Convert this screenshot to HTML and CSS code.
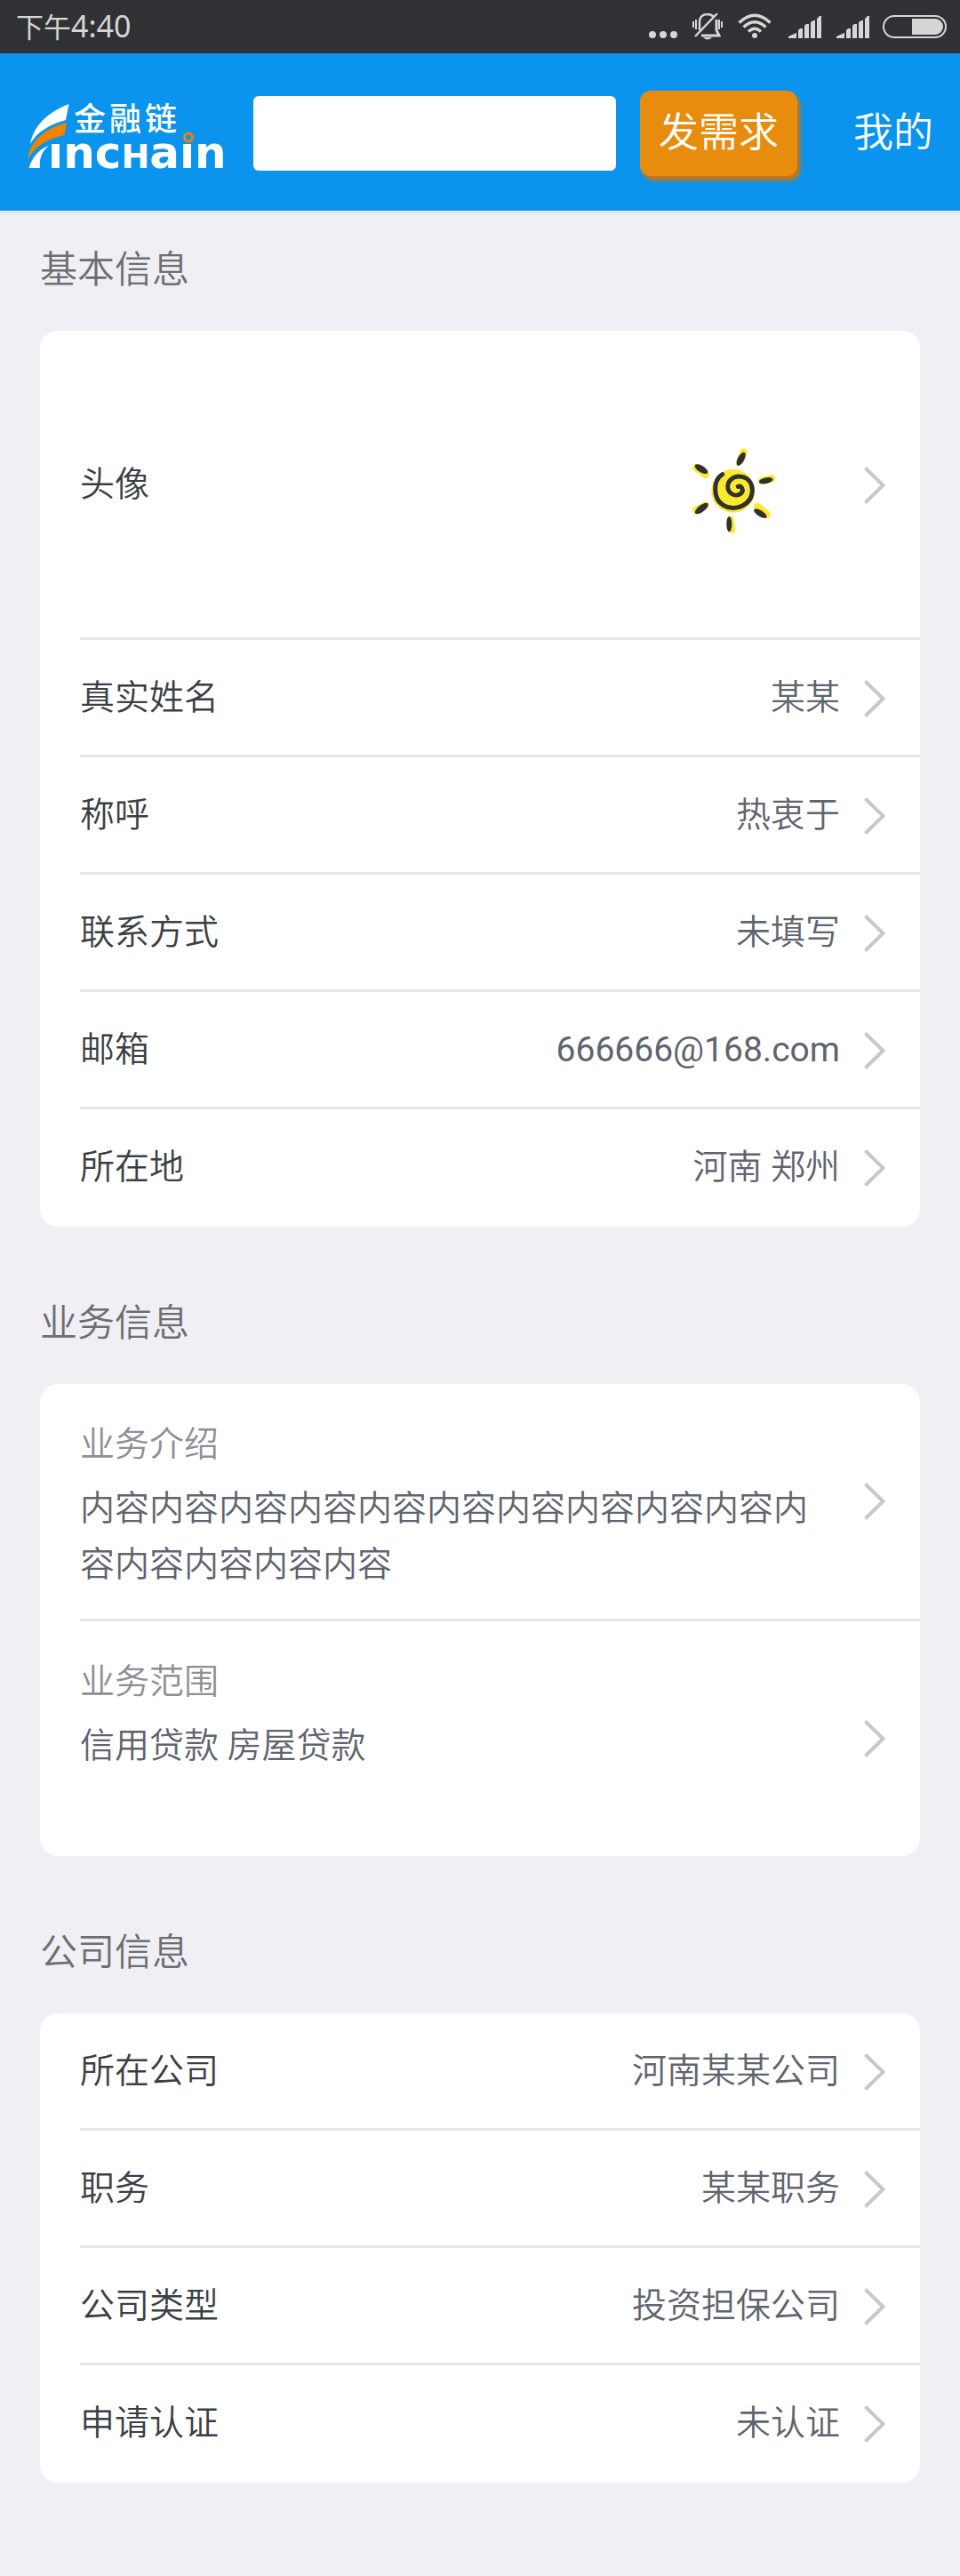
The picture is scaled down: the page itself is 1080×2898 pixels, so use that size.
FILE: index.html
```html
<!DOCTYPE html>
<html lang="zh-CN">
<head>
<meta charset="utf-8">
<meta name="viewport" content="width=device-width, initial-scale=1">
<title>基本信息</title>
<link rel="stylesheet" href="styles.css">
</head>
<body>
<svg width="0" height="0" class="defs" aria-hidden="true">
  <symbol id="chevron" viewBox="0 0 24 42"><path d="M1.500 1.500L21.500 21L1.500 40.500" fill="none" stroke="#c7c7cc" stroke-width="4"/></symbol>
  <symbol id="signal" viewBox="0 0 39 30"><path d="M2 28V26L11 22V28ZM13 28V19L15 17H18V28ZM20 28V14L22 12H25V28ZM27 28V10L30 8H32V28ZM34 28V6L37 3H39V28Z" fill="#d6d6d6"/></symbol>
</svg>

<div class="status">
  <span class="time">下午<span class="digits">4:40</span></span>
  <div class="status-icons">
    <svg width="34" height="30" viewBox="0 0 34 30" fill="#d6d6d6"><circle cx="4" cy="24" r="4"/><circle cx="16" cy="24" r="4"/><circle cx="28" cy="24" r="4"/></svg>
    <svg width="36" height="30" viewBox="0 0 36 30" fill="none" stroke="#d6d6d6">
      <path d="M8 19V10C8 4 12 1 17 1C20 1 22 2 24 4" stroke-width="2.500"/>
      <path d="M27 7V18C27 21 29 22 30 25H10" stroke-width="3"/>
      <path d="M3 26L28 0" stroke-width="2.500"/>
      <path d="M1 9V16M4 7V18M30 7V18M33 9V16" stroke-width="2"/>
      <path d="M12 27H22Q17 32 12 27Z" fill="#d6d6d6" stroke="none"/>
    </svg>
    <svg width="40" height="30" viewBox="0 0 40 30" fill="none" stroke="#d6d6d6" stroke-width="3.500">
      <path d="M1.500 10.500Q19 -6 36.500 10.500M6.500 15.500Q19 4 31.500 15.500M12 20.500Q19 14 26 20.500"/>
      <circle cx="19" cy="25" r="3" fill="#d6d6d6" stroke="none"/>
    </svg>
    <svg width="39" height="30"><use href="#signal"/></svg>
    <svg width="39" height="30"><use href="#signal"/></svg>
    <svg width="72" height="30" viewBox="0 0 72 30">
      <rect x="1" y="3" width="70" height="24" rx="12" fill="none" stroke="#d6d6d6" stroke-width="2"/>
      <path d="M33 6H59A9 9 0 0 1 59 24H33Z" fill="#d6d6d6"/>
    </svg>
  </div>
</div>

<header class="topbar">
  <a class="logo" href="#" aria-label="金融链">
    <svg width="225" height="80" viewBox="30 110 225 80">
      <path d="M34 162C38 141 54 126 77.500 117L74 135C56 140 42 148 34 162Z" fill="#fff"/>
      <path d="M31.500 179C33 160 50 144 75 138L72.500 152C55 156 40 163 31.500 179Z" fill="#f08300"/>
      <path d="M32.500 189C36 178 43 168 55 164C46 171 44 180 45 189Z" fill="#fff"/>
      <text class="logo-cn" x="83 123 163" y="147">金融链</text>
      <text class="logo-en" x="54" y="189">ınc<tspan class="logo-cap">H</tspan>aın</text>
      <circle cx="212" cy="154.500" r="4.500" fill="none" stroke="#f08300" stroke-width="3"/>
    </svg>
  </a>
  <input class="search" type="search" aria-label="搜索">
  <button class="post" type="button">发需求</button>
  <a class="mine" href="#">我的</a>
</header>

<main class="content">
  <section>
    <h2>基本信息</h2>
    <div class="card">
      <a class="row row-avatar" href="#"><span class="label">头像</span>
        <svg class="avatar" width="240" height="240" viewBox="0 0 720 720" fill="none" stroke-linecap="round">
          <g transform="translate(165 192)">
            <circle cx="194" cy="187" r="73" fill="#fbe92c"/>
            <g stroke="#fbe92c" stroke-width="25">
              <path d="M218 85L230 56M70 108L101 132M292 153L324 145M69 252L101 236M276 240L308 267M184 284L189 317"/>
            </g>
            <g fill="#303030">
              <ellipse cx="221" cy="79" rx="25" ry="11" transform="rotate(-62 221 79)"/>
              <ellipse cx="87" cy="113" rx="25" ry="11" transform="rotate(32 87 113)"/>
              <ellipse cx="305" cy="152" rx="24" ry="10" transform="rotate(-12 305 152)"/>
              <ellipse cx="88" cy="246" rx="27" ry="11" transform="rotate(-38 88 246)"/>
              <ellipse cx="286" cy="263" rx="25" ry="10" transform="rotate(32 286 263)"/>
              <ellipse cx="181" cy="299" rx="26" ry="9" transform="rotate(-90 181 299)"/>
            </g>
            <path d="M158 131C125 151 126 214 161 235C201 259 260 233 259 183C258 133 195 124 179 159C166 190 200 213 221 195C232 184 222 168 211 172" stroke="#303030" stroke-width="15"/>
          </g>
        </svg>
        <svg class="chevron"><use href="#chevron"/></svg></a>
      <a class="row" href="#"><span class="label">真实姓名</span><span class="value">某某</span><svg class="chevron"><use href="#chevron"/></svg></a>
      <a class="row" href="#"><span class="label">称呼</span><span class="value">热衷于</span><svg class="chevron"><use href="#chevron"/></svg></a>
      <a class="row" href="#"><span class="label">联系方式</span><span class="value">未填写</span><svg class="chevron"><use href="#chevron"/></svg></a>
      <a class="row" href="#"><span class="label">邮箱</span><span class="value latin">666666@168.com</span><svg class="chevron"><use href="#chevron"/></svg></a>
      <a class="row" href="#"><span class="label">所在地</span><span class="value">河南 郑州</span><svg class="chevron"><use href="#chevron"/></svg></a>
    </div>
  </section>

  <section>
    <h2>业务信息</h2>
    <div class="card">
      <a class="row row-block" href="#">
        <div class="block"><h3>业务介绍</h3><p>内容内容内容内容内容内容内容内容内容内容内容内容内容内容内容</p></div>
        <svg class="chevron"><use href="#chevron"/></svg></a>
      <a class="row row-block" href="#">
        <div class="block"><h3>业务范围</h3><p>信用贷款 房屋贷款</p></div>
        <svg class="chevron"><use href="#chevron"/></svg></a>
    </div>
  </section>

  <section>
    <h2>公司信息</h2>
    <div class="card">
      <a class="row" href="#"><span class="label">所在公司</span><span class="value">河南某某公司</span><svg class="chevron"><use href="#chevron"/></svg></a>
      <a class="row" href="#"><span class="label">职务</span><span class="value">某某职务</span><svg class="chevron"><use href="#chevron"/></svg></a>
      <a class="row" href="#"><span class="label">公司类型</span><span class="value">投资担保公司</span><svg class="chevron"><use href="#chevron"/></svg></a>
      <a class="row" href="#"><span class="label">申请认证</span><span class="value">未认证</span><svg class="chevron"><use href="#chevron"/></svg></a>
    </div>
  </section>
</main>
</body>
</html>
```
FILE: styles.css
```css
* { box-sizing: border-box; }

body {
  margin: 0;
  background: #efeff4;
  color: #3b3f45;
  font-family: Roboto, "Noto Sans CJK SC", sans-serif;
  font-size: 39px;
  font-weight: 350;
  line-height: 63px;
}

a { color: inherit; text-decoration: none; }
svg { display: block; flex: none; }
h2, h3, p { margin: 0; font-weight: inherit; }
.defs { position: absolute; }

/* status bar */
.status {
  display: flex;
  align-items: center;
  justify-content: space-between;
  height: 60px;
  padding: 0 15px 0 18px;
  background: #303135;
  color: #d6d6d6;
  font-weight: 400;
}
.time { font-size: 31px; line-height: 60px; }
.digits { font-family: "Noto Sans", sans-serif; font-size: 34px; }
.status-icons { display: flex; gap: 15px; }

/* top bar */
.topbar {
  display: flex;
  align-items: center;
  height: 180px;
  padding: 0 30px;
  background: #0a94ed;
  box-shadow: inset 0 -3px #e5e5e5;
  color: #fff;
}
.logo svg { overflow: visible; }
.logo-cn { font: 500 36px "Noto Sans CJK SC", sans-serif; fill: #fff; }
.logo-en { font: 700 50px "DejaVu Sans", sans-serif; fill: #fff; }
.logo-cap { font-size: 38px; }
.search {
  flex: 1;
  min-width: 0;
  height: 84px;
  margin: 0 27px 0 30px;
  padding: 0 20px;
  border: 0;
  border-radius: 6px;
  background: #fff;
  font: inherit;
  appearance: none;
}
.post {
  width: 177px;
  height: 96px;
  margin-right: 63px;
  padding: 0;
  border: 0;
  border-radius: 12px;
  background: #e88c0e;
  box-shadow: 3px 5px 4px #cd7610;
  color: #fff;
  font: inherit;
  font-size: 45px;
  line-height: 60px;
}
.mine { font-size: 45px; line-height: 60px; }

/* sections */
.content {
  display: flex;
  flex-direction: column;
  gap: 79px;
  padding: 34px 45px 105px;
}
h2 {
  margin-bottom: 38px;
  color: #6d6d72;
  font-size: 42px;
  line-height: 60px;
}
.card {
  overflow: hidden;
  padding-left: 45px;
  border-radius: 20px;
  background: #fff;
}
.row {
  display: flex;
  align-items: center;
  min-height: 132px;
  padding-right: 39px;
}
.row:not(:last-child) { box-shadow: inset 0 -3px #e5e5e5; }
.row-avatar { min-height: 348px; }
.label { flex: 1; padding-bottom: 2px; }
.value { padding-bottom: 2px; color: #5f646e; }
.latin { font-weight: 400; }
.chevron { width: 24px; height: 42px; margin-left: 27px; }

.row-block { min-height: 264px; }
.row-block:not(:last-child) { min-height: 267px; padding-bottom: 3px; }
.block { flex: 1; align-self: flex-start; padding: 37px 0 20px; }
h3 { margin-bottom: 9px; color: #8f8f94; font-size: 39px; line-height: 63px; }
.block p { color: #5f646e; }
```
